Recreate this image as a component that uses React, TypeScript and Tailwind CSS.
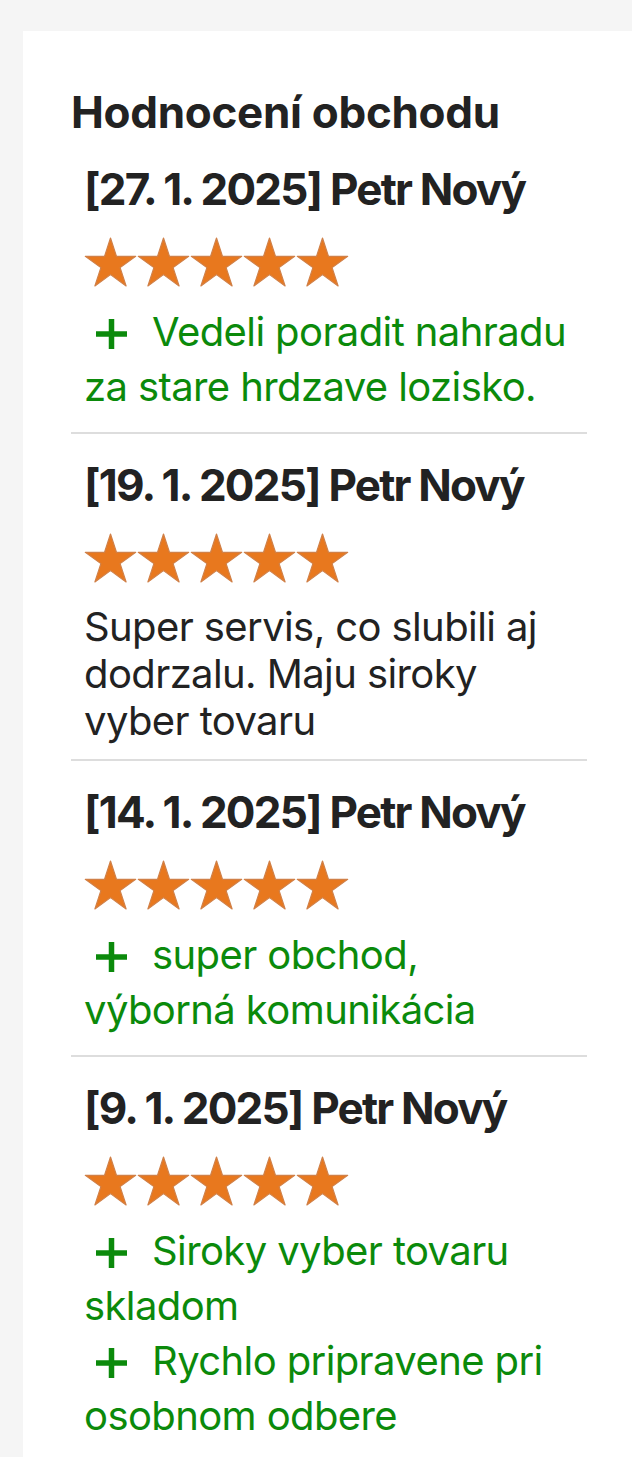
import React from 'react'

type Review = {
    date: string
    author: string
    pros?: string[]
    text?: string
}

const reviews: Review[] = [
    { date: '27. 1. 2025', author: 'Petr Nový', pros: ['Vedeli poradit nahradu za stare hrdzave lozisko.'] },
    { date: '19. 1. 2025', author: 'Petr Nový', text: 'Super servis, co slubili aj dodrzalu. Maju siroky vyber tovaru' },
    { date: '14. 1. 2025', author: 'Petr Nový', pros: ['super obchod, výborná komunikácia'] },
    { date: '9. 1. 2025', author: 'Petr Nový', pros: ['Siroky vyber tovaru skladom', 'Rychlo pripravene pri osobnom odbere'] },
]

const STAR = '26.5,1 32.45,19.31 51.7,19.3 36.12,30.63 42.1,48.9 26.5,37.62 10.9,48.9 16.88,30.63 1.3,19.3 20.55,19.31'

function Stars() {
    return (
        <div className="flex">
            {[0, 1, 2, 3, 4].map((i) => (
                <svg key={i} width="53" height="50" viewBox="0 0 53 50" className="block">
                    <polygon points={STAR} fill="#e8781e" stroke="#d08048" strokeWidth="1.2" strokeLinejoin="round" />
                </svg>
            ))}
        </div>
    )
}

function Plus() {
    return (
        <svg width="35" height="32" viewBox="0 0 35 32" className="inline-block align-[-4px] ml-[10px] mr-[23px]">
            <path d="M17.5 1v30M2 16h31" stroke="currentColor" strokeWidth="5.5" />
        </svg>
    )
}

export default function App() {
    return (
        <div className="min-h-screen bg-[#f5f5f5] pt-[31px] font-['Inter',sans-serif]">
            <div className="ml-[23px] bg-white pl-[48px] pr-[45px] pt-[55px] pb-[40px]">
                <h2 className="text-[44px] leading-[52px] font-bold tracking-[-0.3px] text-[#222222]">Hodnocení obchodu</h2>

                {reviews.map((r, idx) => (
                    <div
                        key={idx}
                        className={`pl-[13px] pt-[25px] ${idx < reviews.length - 1 ? 'border-b-2 border-[#dddddd]' : ''} ${r.pros ? 'pb-[18px]' : 'pb-[15px]'}`}
                    >
                        <div className="text-[44px] leading-[52px] font-bold tracking-[-1.8px] text-[#222222]">
                            [{r.date}] {r.author}
                        </div>
                        <div className="mt-[22px]">
                            <Stars />
                        </div>
                        <div className={`${r.pros ? 'mt-[17px]' : 'mt-[20px]'} pr-[12px] tracking-[-0.6px]`}>
                            {r.pros &&
                                r.pros.map((p, i) => (
                                    <div key={i} className="text-[40px] leading-[55px] text-[#0b8a0b]">
                                        <Plus />
                                        {p}
                                    </div>
                                ))}
                            {r.text && <p className="text-[40px] leading-[47px] text-[#222222]">{r.text}</p>}
                        </div>
                    </div>
                ))}
            </div>
        </div>
    )
}
